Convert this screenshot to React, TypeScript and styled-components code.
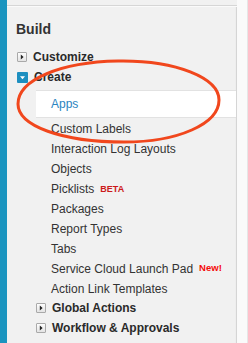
import React from "react";
import styled, { createGlobalStyle } from "styled-components";

const GlobalStyle = createGlobalStyle`
  html, body {
    margin: 0;
    padding: 0;
    background: #fff;
  }
  body {
    font-family: "Liberation Sans", Arial, Helvetica, sans-serif;
    color: #333;
  }
`;

type Node = { label: string; badge?: "beta" | "new"; active?: boolean };

const createItems: Node[] = [
  { label: "Apps", active: true },
  { label: "Custom Labels" },
  { label: "Interaction Log Layouts" },
  { label: "Objects" },
  { label: "Picklists", badge: "beta" },
  { label: "Packages" },
  { label: "Report Types" },
  { label: "Tabs" },
  { label: "Service Cloud Launch Pad", badge: "new" },
  { label: "Action Link Templates" },
];

function Toggle({ open }: { open?: boolean }) {
  if (open) {
    return (
      <ToggleBox open>
        <svg width="11" height="11" viewBox="0 0 11 11">
          <path d="M3 4.2 L8 4.2 L5.5 7.2 Z" fill="#fff" />
        </svg>
      </ToggleBox>
    );
  }
  return (
    <ToggleBox>
      <svg width="10" height="10" viewBox="0 0 10 10">
        <path d="M3.8 2.6 L6.6 5 L3.8 7.4 Z" fill="#222" />
      </svg>
    </ToggleBox>
  );
}

export default function App() {
  return (
    <>
      <GlobalStyle />
      <Page>
        <Stripe />
        <Panel>
          <TopBar />
          <Content>
            <Heading>Build</Heading>
            <Tree>
              <ParentRow>
                <Toggle />
                <ParentLabel>Customize</ParentLabel>
              </ParentRow>
              <ParentRow>
                <Toggle open />
                <ParentLabel>Create</ParentLabel>
              </ParentRow>
              <Children>
                {createItems.map((item) =>
                  item.active ? (
                    <ActiveItem key={item.label}>{item.label}</ActiveItem>
                  ) : (
                    <Item key={item.label}>
                      {item.label}
                      {item.badge === "beta" && <Beta>BETA</Beta>}
                      {item.badge === "new" && <NewTag>New!</NewTag>}
                    </Item>
                  )
                )}
                <SubGroup>
                  <SubRow>
                    <Toggle />
                    <ParentLabel>Global Actions</ParentLabel>
                  </SubRow>
                  <SubRow>
                    <Toggle />
                    <ParentLabel>Workflow &amp; Approvals</ParentLabel>
                  </SubRow>
                </SubGroup>
              </Children>
            </Tree>
          </Content>
        </Panel>
        <Gutter />
        <Highlight viewBox="0 0 248 343" width="248" height="343">
          <path
            d="M118 61 C176 60 219 78 219 100 C219 124 178 142 124 142 C62 142 18 126 18 104 C18 80 60 62 118 61 Z"
            fill="none"
            stroke="#f1471d"
            strokeWidth="3"
          />
        </Highlight>
      </Page>
    </>
  );
}

const Page = styled.div`
  position: relative;
  display: flex;
  width: 248px;
  height: 343px;
  overflow: hidden;
`;

const Stripe = styled.div`
  width: 7px;
  flex-shrink: 0;
  background: #1a94bf;
`;

const Panel = styled.div`
  width: 230px;
  flex-shrink: 0;
  display: flex;
  flex-direction: column;
  background: #f1f1f1;
  box-shadow: inset -2px 0 1px -1px #d2d2d2;
`;

const TopBar = styled.div`
  height: 5px;
  flex-shrink: 0;
  background: #f1f1f1;
  border-bottom: 1px solid #d6d6d6;
  box-shadow: 0 1px 0 #fafafa;
`;

const Content = styled.div`
  padding-top: 13px;
  padding-right: 1px;
`;

const Heading = styled.div`
  padding-left: 9px;
  height: 20px;
  line-height: 20px;
  font-size: 14px;
  font-weight: bold;
  color: #333;
  margin-bottom: 8px;
`;

const Tree = styled.div`
  display: flex;
  flex-direction: column;
`;

const ParentRow = styled.div`
  display: flex;
  align-items: center;
  gap: 6px;
  height: 20px;
  padding-left: 10px;
`;

const ParentLabel = styled.span`
  font-size: 12px;
  font-weight: bold;
  line-height: 20px;
  color: #2a2a2a;
`;

const ToggleBox = styled.span<{ open?: boolean }>`
  display: inline-flex;
  flex-shrink: 0;
  width: ${(p) => (p.open ? "11px" : "10px")};
  height: ${(p) => (p.open ? "11px" : "10px")};
  box-sizing: border-box;
  border-radius: 1px;
  background: ${(p) =>
    p.open ? "#1d8fc0" : "linear-gradient(#fdfdfd, #e4e4e4)"};
  border: ${(p) => (p.open ? "none" : "1px solid #a9a9a9")};
  align-items: center;
  justify-content: center;
  svg {
    display: block;
    flex-shrink: 0;
  }
`;

const Children = styled.div`
  display: flex;
  flex-direction: column;
  margin-top: 3px;
`;

const Item = styled.div`
  display: flex;
  align-items: center;
  height: 20px;
  padding-left: 44px;
  font-size: 12px;
  line-height: 20px;
  color: #333;
  white-space: nowrap;
`;

const ActiveItem = styled.div`
  height: 26px;
  margin-left: 29px;
  margin-bottom: 1px;
  padding-left: 15px;
  background: #fff;
  border-top: 1px solid #e2e2e2;
  border-bottom: 1px solid #e2e2e2;
  font-size: 12px;
  line-height: 26px;
  color: #2a84c0;
`;

const Beta = styled.span`
  margin-left: 6px;
  font-size: 9px;
  font-weight: bold;
  color: #cc1a1a;
  line-height: 1;
  padding-top: 1px;
`;

const NewTag = styled.span`
  margin-left: 6px;
  font-size: 9.5px;
  font-weight: bold;
  color: #f50a0a;
  line-height: 1;
  padding-bottom: 3px;
`;

const SubGroup = styled.div`
  display: flex;
  flex-direction: column;
  margin-top: -1px;
`;

const SubRow = styled(ParentRow)`
  padding-left: 29px;
`;

const Gutter = styled.div`
  flex: 1;
  background: #fafafa;
  border-right: 1px solid #e6e6e6;
`;

const Highlight = styled.svg`
  position: absolute;
  left: 0;
  top: 0;
  pointer-events: none;
`;
